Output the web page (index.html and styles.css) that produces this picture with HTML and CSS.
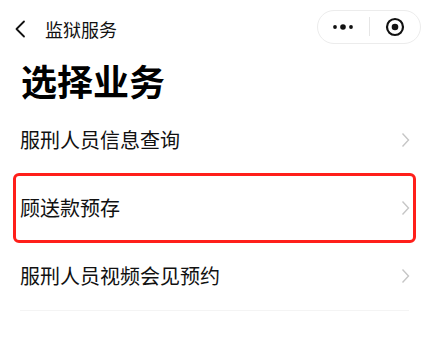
FILE: index.html
```html
<!DOCTYPE html>
<html lang="zh-CN">
<head>
<meta charset="utf-8">
<title>监狱服务</title>
<link rel="stylesheet" href="styles.css">
</head>
<body>
<div class="page">
  <header class="nav">
    <div class="nav-left">
      <svg class="back" width="12" height="18" viewBox="0 0 12 18"><path d="M10 1.5 L2.5 9 L10 16.5" fill="none" stroke="#111" stroke-width="1.8" stroke-linecap="round" stroke-linejoin="round"/></svg>
      <span class="nav-title">监狱服务</span>
    </div>
    <div class="capsule">
      <div class="cap-btn">
        <svg width="22" height="8" viewBox="0 0 22 8"><circle cx="3" cy="4" r="1.9" fill="#111"/><circle cx="11" cy="4" r="2.8" fill="#111"/><circle cx="19" cy="4" r="1.9" fill="#111"/></svg>
      </div>
      <div class="cap-sep"></div>
      <div class="cap-btn">
        <svg width="20" height="20" viewBox="0 0 20 20"><circle cx="10" cy="10" r="8" fill="none" stroke="#111" stroke-width="2.2"/><circle cx="10" cy="10" r="3.3" fill="#111"/></svg>
      </div>
    </div>
  </header>
  <h1 class="heading">选择业务</h1>
  <ul class="list">
    <li class="row"><span class="label">服刑人员信息查询</span><svg class="arrow" width="9" height="16" viewBox="0 0 9 16"><path d="M1.5 1.5 L7.5 8 L1.5 14.5" fill="none" stroke="#c6c6c6" stroke-width="1.4"/></svg></li>
    <li class="row row-marked"><span class="label">顾送款预存</span><svg class="arrow" width="9" height="16" viewBox="0 0 9 16"><path d="M1.5 1.5 L7.5 8 L1.5 14.5" fill="none" stroke="#c6c6c6" stroke-width="1.4"/></svg></li>
    <li class="row row-last"><span class="label">服刑人员视频会见预约</span><svg class="arrow" width="9" height="16" viewBox="0 0 9 16"><path d="M1.5 1.5 L7.5 8 L1.5 14.5" fill="none" stroke="#c6c6c6" stroke-width="1.4"/></svg></li>
  </ul>
</div>
</body>
</html>
```

FILE: styles.css
```css
html, body {
  margin: 0;
  padding: 0;
  background: #ffffff;
}
body {
  font-family: "Noto Sans CJK SC", "Noto Sans", sans-serif;
  color: #111;
}
.page {
  width: 431px;
  height: 364px;
  overflow: hidden;
  background: #fff;
}
.nav {
  height: 53px;
  display: flex;
  align-items: center;
  justify-content: space-between;
  padding: 0 10px 0 14px;
  box-sizing: border-box;
}
.nav-left {
  display: flex;
  align-items: center;
  gap: 19px;
  margin-top: 4px;
}
.back {
  display: block;
}
.nav-title {
  font-size: 18px;
  line-height: 20px;
  color: #111;
}
.capsule {
  height: 34px;
  width: 104px;
  box-sizing: border-box;
  border: 1px solid #ececec;
  border-radius: 17px;
  display: flex;
  align-items: center;
  background: #fff;
}
.cap-btn {
  flex: 1;
  display: flex;
  align-items: center;
  justify-content: center;
}
.cap-btn svg {
  display: block;
}
.cap-sep {
  width: 1px;
  height: 19px;
  background: #e6e6e6;
}
.heading {
  margin: 9px 0 0 21px;
  font-size: 36px;
  line-height: 36px;
  height: 35px;
  font-weight: 700;
  color: #000;
}
.list {
  list-style: none;
  margin: 9px 0 0 0;
  padding: 0;
}
.row {
  position: relative;
  height: 68px;
  display: flex;
  align-items: center;
  justify-content: space-between;
  margin: 0 22px 0 20px;
}
.row-last {
  border-bottom: 1px solid #f4f4f4;
}
.label {
  font-size: 20px;
  line-height: 24px;
  color: #111;
}
.arrow {
  display: block;
  margin-right: -1px;
}
.row-marked::after {
  content: "";
  position: absolute;
  left: -7px;
  right: -7px;
  top: -1px;
  bottom: -1px;
  border: 3.5px solid #ff1f1a;
  border-radius: 6px;
}
```
